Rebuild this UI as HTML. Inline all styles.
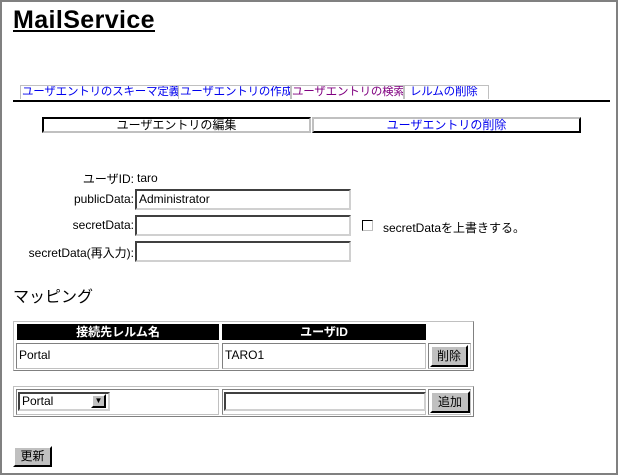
<!DOCTYPE html>
<html><head><meta charset="utf-8"><style>
body{margin:0;width:618px;height:475px;position:relative;background:#fff;font-family:"Liberation Sans","Noto Sans CJK JP",sans-serif;font-size:12px;color:#000;overflow:hidden}
.a{position:absolute;white-space:nowrap}
.frame{position:absolute;left:0;top:0;width:614px;height:471px;border:2px solid #808080}
.tab{position:absolute;top:85px;height:13px;border:1px solid #c0c0c0;border-bottom:none;color:#0000ee;font-size:11.5px;line-height:13px;padding-left:1px;white-space:nowrap;overflow:hidden;letter-spacing:-0.2px}
.inp{position:absolute;height:17px;border:2px solid;border-color:#404040 #d0d0d0 #d0d0d0 #404040;background:#fff;font-size:12px;line-height:17px;padding-left:2px;box-sizing:content-box;white-space:nowrap}
.btn{position:absolute;background:#c0c0c0;border:2px solid;border-color:#fff #000 #000 #fff;font-size:12px;text-align:center;box-sizing:border-box}
.lbl{position:absolute;right:484px;text-align:right;font-size:12px;white-space:nowrap}
.cell{position:absolute;border:1px solid;border-color:#808080 #c0c0c0 #c0c0c0 #808080;box-sizing:border-box;white-space:nowrap}
.hd{position:absolute;background:#000;color:#fff;font-weight:bold;text-align:center;font-size:12px;line-height:16px}
</style></head><body>
<div class="frame"></div>
<div class="a" style="left:13px;top:5px;font-size:25px;letter-spacing:0.4px;font-weight:bold;text-decoration:underline;line-height:30px">MailService</div>
<div class="tab" style="left:20px;width:156px">ユーザエントリのスキーマ定義</div>
<div class="tab" style="left:178px;width:111px">ユーザエントリの作成</div>
<div class="tab" style="left:290px;width:112px;color:#800080">ユーザエントリの検索</div>
<div class="tab" style="left:403px;width:78px;padding-left:6px">レルムの削除</div>
<div class="a" style="left:13px;top:100px;width:597px;height:2px;background:#000"></div>
<div class="a" style="left:42px;top:117px;width:265px;height:12px;border:2px solid;border-color:#000 #c0c0c0 #c0c0c0 #000;text-align:center;line-height:12px">ユーザエントリの編集</div>
<div class="a" style="left:312px;top:117px;width:265px;height:12px;border:2px solid;border-color:#c0c0c0 #000 #000 #c0c0c0;text-align:center;line-height:12px;color:#0000ee">ユーザエントリの削除</div>
<div class="lbl" style="top:170px">ユーザID:</div>
<div class="a" style="left:137px;top:171px">taro</div>
<div class="lbl" style="top:192px">publicData:</div>
<div class="inp" style="left:135px;top:189px;width:210px">Administrator</div>
<div class="lbl" style="top:218px">secretData:</div>
<div class="inp" style="left:135px;top:215px;width:210px"></div>
<div class="a" style="left:362px;top:220px;width:9px;height:9px;border:1px solid;border-color:#000 #c0c0c0 #c0c0c0 #000"></div>
<div class="a" style="left:383px;top:219px">secretDataを上書きする。</div>
<div class="lbl" style="top:244px">secretData(再入力):</div>
<div class="inp" style="left:135px;top:241px;width:210px"></div>
<div class="a" style="left:13px;top:283px;font-size:16px">マッピング</div>
<div class="cell" style="left:13px;top:321px;width:461px;height:50px;border-color:#c0c0c0 #808080 #808080 #c0c0c0"></div>
<div class="hd" style="left:17px;top:324px;width:202px">接続先レルム名</div>
<div class="hd" style="left:222px;top:324px;width:204px">ユーザID</div>
<div class="cell" style="left:16px;top:343px;width:203px;height:26px;padding:4px 0 0 2px">Portal</div>
<div class="cell" style="left:222px;top:343px;width:204px;height:26px;padding:4px 0 0 2px">TARO1</div>
<div class="cell" style="left:428px;top:343px;width:43px;height:26px"></div>
<div class="btn" style="left:430px;top:345px;width:38px;height:22px;line-height:18px">削除</div>
<div class="cell" style="left:13px;top:386px;width:461px;height:31px;border-color:#c0c0c0 #808080 #808080 #c0c0c0"></div>
<div class="cell" style="left:16px;top:389px;width:203px;height:26px"></div>
<div class="cell" style="left:222px;top:389px;width:204px;height:26px"></div>
<div class="cell" style="left:428px;top:389px;width:43px;height:26px"></div>
<div class="inp" style="left:18px;top:392px;width:86px;height:15px;line-height:15px">Portal</div>
<div class="btn" style="left:91px;top:394px;width:15px;height:14px;font-size:8px;line-height:10px">▼</div>
<div class="inp" style="left:224px;top:392px;width:196px;height:15px"></div>
<div class="btn" style="left:430px;top:391px;width:40px;height:22px;line-height:18px">追加</div>
<div class="btn" style="left:13px;top:446px;width:39px;height:21px;line-height:17px">更新</div>
</body></html>
